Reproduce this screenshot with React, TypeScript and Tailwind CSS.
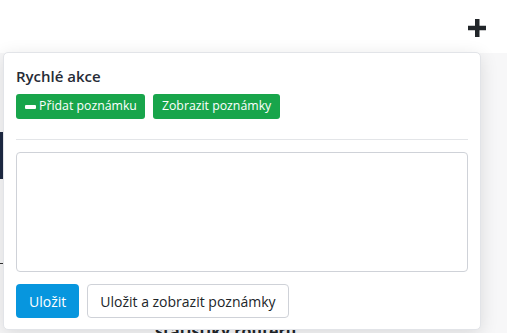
import React from 'react';

const PlusIcon = () => (
  <svg width="18" height="18" viewBox="0 0 18 18" className="text-[#212529]">
    <rect x="7" y="0" width="4.5" height="18" fill="currentColor" />
    <rect x="0" y="6.75" width="18" height="4.5" fill="currentColor" />
  </svg>
);

const MinusIcon = () => (
  <span className="inline-block w-[11px] h-[4px] rounded-[1px] bg-white" />
);

export default function App() {
  return (
    <div className="relative w-[507px] h-[333px] overflow-hidden bg-white font-['Open_Sans',sans-serif]">
      {/* top bar */}
      <div className="h-[53px] flex items-start justify-end pr-[21px] pt-[19px] bg-white">
        <PlusIcon />
      </div>

      {/* page behind */}
      <div className="h-[280px] bg-[#f7f7f8] flex">
        <div className="w-[3px] flex flex-col">
          <div className="h-[79px]" />
          <div className="h-[47px] bg-[#1e2a44]" />
          <div className="h-[84px]" />
          <div className="h-[1px] bg-[#333]" />
        </div>
        <div className="flex-1 pl-[152px] pt-[270px]">
          <h2 className="text-[16px] font-bold text-[#212529] leading-none">statistiky routeru</h2>
        </div>
      </div>

      {/* quick actions popover */}
      <div className="absolute left-[3px] top-[52px] w-[478px] h-[278px] bg-white border border-[#e2e4e8] rounded-[5px] shadow-[0_4px_18px_rgba(0,0,0,0.12)] px-[12px] pt-[12px]">
        <h3 className="text-[15px] font-semibold text-[#262b36] leading-[22px]">Rychlé akce</h3>
        <div className="flex gap-[8px] mt-[7px]">
          <button className="h-[25px] pl-[9px] pr-[8px] flex items-center gap-[3px] rounded-[3px] bg-[#18a54b] text-white text-[12.3px] leading-none">
            <MinusIcon />
            Přidat poznámku
          </button>
          <button className="h-[25px] px-[9px] flex items-center rounded-[3px] bg-[#18a54b] text-white text-[12.3px] leading-none">
            Zobrazit poznámky
          </button>
        </div>
        <div className="mt-[20px] h-px bg-[#e3e5e8]" />
        <textarea className="block mt-[12px] w-full h-[120px] border border-[#cfd2d8] rounded-[4px] resize-none outline-none" />
        <div className="flex gap-[8px] mt-[12px]">
          <button className="h-[34px] px-[13px] rounded-[4px] bg-[#0796de] text-white text-[14px]">Uložit</button>
          <button className="h-[34px] px-[12px] rounded-[4px] bg-white border border-[#cfd2d8] text-[#212529] text-[14px]">
            Uložit a zobrazit poznámky
          </button>
        </div>
      </div>
    </div>
  );
}
